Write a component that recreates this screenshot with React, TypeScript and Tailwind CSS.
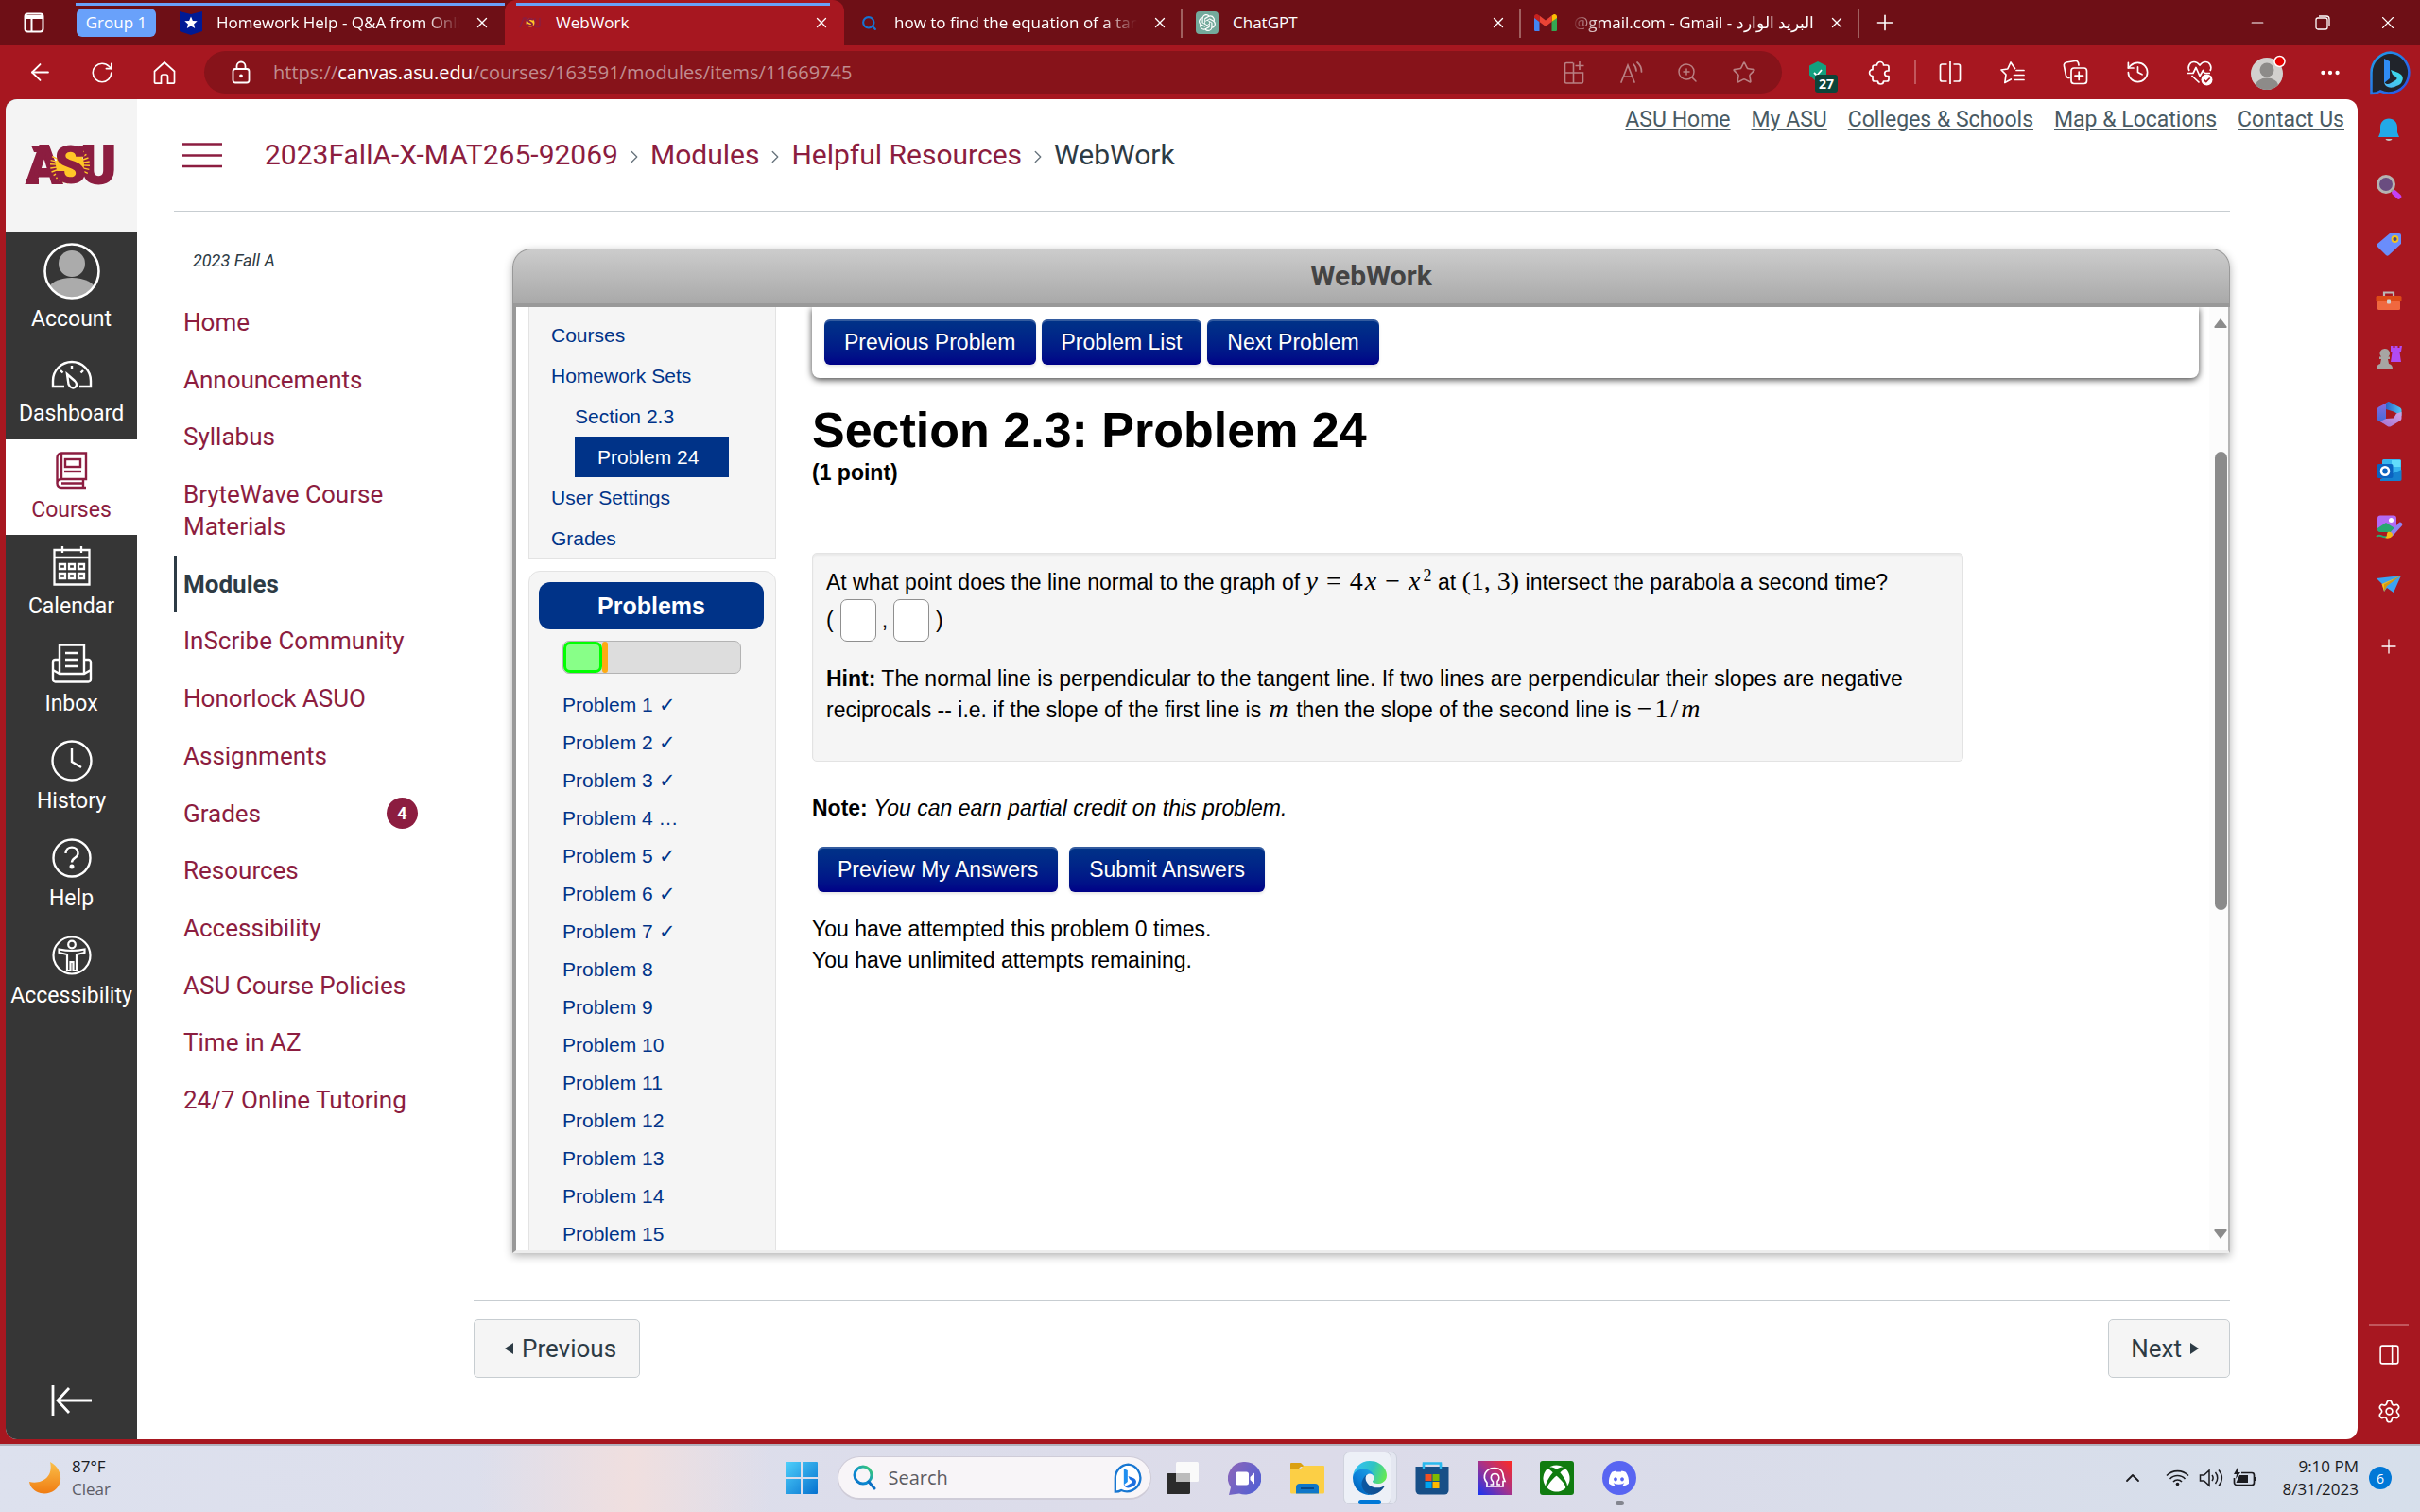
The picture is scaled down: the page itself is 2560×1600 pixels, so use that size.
import React from "react";
import type { ReactNode } from "react";
import {
  ArrowLeft,
  RotateCw,
  ZoomIn,
  Star,
  History,
  X,
  Plus,
  Minus,
  Search,
  Settings,
  ChevronUp,
  ChevronRight,
  Ellipsis,
  PanelRight,
} from "lucide-react";
import { FaDiscord, FaXbox } from "react-icons/fa";
import { SiOpenai } from "react-icons/si";

/* ---------- Tab strip ---------- */

function TabClose({ label }: { label: string }) {
  return (
    <button aria-label={label} className="flex w-[48px] shrink-0 items-center justify-center text-white">
      <X size={18} strokeWidth={1.8} />
    </button>
  );
}

function Tab({
  icon,
  title,
  divider = false,
  grouped = false,
  fadeLeft = false,
  fade = false,
}: {
  icon: ReactNode;
  title: string;
  divider?: boolean;
  grouped?: boolean;
  fadeLeft?: boolean;
  fade?: boolean;
}) {
  return (
    <div className="relative flex h-[48px] w-[358px] items-center">
      {grouped && <span className="absolute top-[3px] right-0 left-[-96px] h-[3px] bg-[#69a1fa]" />}
      <span className="ml-[13px] flex w-[26px] shrink-0 justify-center">{icon}</span>
      <span
        className={
          fadeLeft
            ? "ml-[14px] flex flex-1 justify-end overflow-hidden [mask-image:linear-gradient(to_right,transparent,black_12%)]"
            : fade
              ? "ml-[14px] flex flex-1 overflow-hidden [mask-image:linear-gradient(to_right,black_86%,transparent)]"
              : "ml-[14px] flex flex-1 overflow-hidden"
        }
      >
        <span className="text-[17px] leading-[24px] whitespace-nowrap text-white">{title}</span>
      </span>
      <TabClose label={`Close ${title}`} />
      {divider && <span className="absolute top-[10px] right-0 h-[30px] w-[2px] bg-[#a0605f]" />}
    </div>
  );
}

function RibbonStar() {
  return (
    <svg width="26" height="26" viewBox="0 0 26 26">
      <path d="M1 1l12 3 12-3v21l-12 4L1 22z" fill="#001a94" />
      <path d="M13 6.500l1.900 4.400 4.800.4-3.600 3.100 1.100 4.700-4.200-2.500-4.200 2.500 1.100-4.700-3.600-3.100 4.800-.4z" fill="#fff" />
    </svg>
  );
}

function MiniSun() {
  return (
    <svg width="24" height="12" viewBox="0 0 24 12">
      <path d="M1 11L5 1h2l2 10M17 1v8c0 2 5 2 5 0V1" fill="none" stroke="#8c1d40" strokeWidth="1.600" />
      <ellipse cx="12" cy="6" rx="4.500" ry="4.500" fill="#ffc627" />
      <path d="M15 3c-2-2-6-1-5 1s4 1.500 4 3.500-4 2-5 0" fill="none" stroke="#8c1d40" strokeWidth="2" />
    </svg>
  );
}

function GmailIcon() {
  return (
    <svg width="24" height="18" viewBox="0 0 24 18">
      <path d="M0 3v13.400C0 17.300.7 18 1.600 18H5.500V8z" fill="#4285f4" />
      <path d="M18.500 18h3.900c.9 0 1.600-.7 1.600-1.600V3l-5.500 5z" fill="#34a853" />
      <path d="M18.500 1.600V8L24 4V2.400c0-2-2.300-3.100-3.900-1.900z" fill="#fbbc04" />
      <path d="M5.500 8V1.600L12 6.500l6.500-4.900V8L12 12.900z" fill="#ea4335" />
      <path d="M0 2.400V4l5.500 4V1.600L3.900.5C2.300-.7 0 .4 0 2.400z" fill="#c5221f" />
    </svg>
  );
}

function TabStrip() {
  return (
    <div className="flex h-[48px] items-center bg-[#6e0f16]">
      <button aria-label="Tab actions" className="flex w-[72px] justify-center text-white">
        <svg width="22" height="22" viewBox="0 0 22 22" fill="none" stroke="currentColor" strokeWidth="2">
          <rect x="1.500" y="1.500" width="19" height="19" rx="3" />
          <path d="M2 5h18" strokeWidth="4" />
          <path d="M8.500 6v14" />
        </svg>
      </button>
      <button className="ml-[9px] h-[30px] w-[84px] rounded-[6px] bg-[#69a1fa] text-[17px] text-white">Group 1</button>
      <div className="ml-[11px] flex">
        <Tab icon={<RibbonStar />} title="Homework Help - Q&A from Online Tutors" grouped fade />
        <div className="relative h-[48px] w-[359px] rounded-t-[12px] bg-[#a71720]">
          <span className="absolute top-[3px] right-[15px] left-[12px] h-[3px] bg-[#69a1fa]" />
          <div className="flex h-full items-center">
            <span className="ml-[14px] flex w-[26px] justify-center">
              <MiniSun />
            </span>
            <span className="ml-[14px] flex-1 text-[17px] text-white">WebWork</span>
            <TabClose label="Close WebWork" />
          </div>
        </div>
        <Tab
          icon={<Search size={17} strokeWidth={3} className="text-[#1673d1]" />}
          title="how to find the equation of a tangent line"
          divider
          fade
        />
        <Tab
          icon={
            <span className="rounded-[4px] bg-[#74aa9c] p-[3px] text-white">
              <SiOpenai size={18} />
            </span>
          }
          title="ChatGPT"
          divider
        />
        <Tab icon={<GmailIcon />} title="@gmail.com - Gmail - البريد الوارد" divider fadeLeft />
      </div>
      <button aria-label="New tab" className="flex w-[54px] justify-center text-white">
        <Plus size={26} strokeWidth={1.500} />
      </button>
      <div className="ml-auto flex text-white">
        <button aria-label="Minimize" className="flex w-[69px] items-center justify-center">
          <Minus size={20} strokeWidth={1.400} />
        </button>
        <button aria-label="Restore" className="flex w-[69px] items-center justify-center">
          <svg width="16" height="16" viewBox="0 0 16 16" fill="none" stroke="currentColor" strokeWidth="1.300">
            <rect x="1" y="3" width="12" height="12" rx="2" />
            <path d="M4 1h8c2 0 3 1 3 3v8" />
          </svg>
        </button>
        <button aria-label="Close window" className="flex w-[69px] items-center justify-center">
          <X size={22} strokeWidth={1.200} />
        </button>
      </div>
    </div>
  );
}

/* ---------- Toolbar ---------- */

function ToolButton({ label, children }: { label: string; children: ReactNode }) {
  return (
    <button aria-label={label} className="relative flex h-[57px] w-[66px] shrink-0 items-center justify-center">
      {children}
    </button>
  );
}

function PillButton({ label, children }: { label: string; children: ReactNode }) {
  return (
    <button aria-label={label} className="flex w-[60px] shrink-0 items-center justify-center text-[#b98083]">
      {children}
    </button>
  );
}

function BingBubble() {
  return (
    <svg width="46" height="48" viewBox="0 0 46 48">
      <defs>
        <linearGradient id="bingRing" x1="0" y1="0" x2="1" y2="1">
          <stop offset="0" stopColor="#1fa0e8" />
          <stop offset="1" stopColor="#2b4fe8" />
        </linearGradient>
        <linearGradient id="bingB" x1="0" y1="1" x2="1" y2="0">
          <stop offset="0" stopColor="#4fb4f8" />
          <stop offset="1" stopColor="#37e2e5" />
        </linearGradient>
      </defs>
      <path d="M23 2.500A21.500 21.500 0 1 1 12 43.500c-3 2-6 2.500-9.500 2.500V24A21.500 21.500 0 0 1 23 2.500z" fill="#20242b" stroke="url(#bingRing)" strokeWidth="2.500" />
      <path d="M16 9l6 3v18l-6 5z" fill="#2f8cf5" />
      <path d="M16 34c2 2 4 3 7 1l5-3c2-1 2-3 0-4l-3-2-2-5 8 3c4 2 6 5 4 9-1 3-3 4-6 5-5 3-12 2-13-4z" fill="url(#bingB)" />
    </svg>
  );
}

function Toolbar() {
  return (
    <div className="flex h-[57px] items-center text-white">
      <div className="flex pl-[9px]">
        <ToolButton label="Back">
          <ArrowLeft size={29} strokeWidth={1.500} />
        </ToolButton>
        <ToolButton label="Refresh">
          <RotateCw size={26} strokeWidth={1.500} />
        </ToolButton>
        <ToolButton label="Home">
          <svg width="24" height="26" viewBox="0 0 24 26" fill="none" stroke="currentColor" strokeWidth="1.700">
            <path d="M1.500 11.500L12 2l10.500 9.500V23a1.200 1.200 0 0 1-1.200 1.200H15.500V17a2 2 0 0 0-2-2h-3a2 2 0 0 0-2 2v7.200H2.700A1.200 1.200 0 0 1 1.500 23z" />
          </svg>
        </ToolButton>
      </div>
      <div className="ml-[9px] flex h-[45px] flex-1 items-center rounded-full bg-[#87131a]">
        <span className="ml-[25px] flex w-[28px] justify-center">
          <svg width="20" height="26" viewBox="0 0 20 26" fill="none" stroke="currentColor" strokeWidth="1.800">
            <rect x="1.500" y="9" width="17" height="14.500" rx="2.500" />
            <path d="M5.500 9V6a4.500 4.500 0 0 1 9 0v3" />
            <circle cx="10" cy="16.300" r="1" fill="currentColor" />
          </svg>
        </span>
        <div className="relative ml-[20px] flex-1 text-[20px] leading-[30px]">
          <span className="whitespace-nowrap text-[#c08d90]">
            https://<span className="text-white">canvas.asu.edu</span>/courses/163591/modules/items/11669745
          </span>
          <input type="text" aria-label="Address and search bar" className="absolute inset-0 w-full bg-transparent outline-none" />
        </div>
        <PillButton label="App available">
          <svg width="24" height="26" viewBox="0 0 24 26" fill="none" stroke="currentColor" strokeWidth="1.600">
            <path d="M11 2.500H4A1.500 1.500 0 0 0 2.500 4v18.500A1.500 1.500 0 0 0 4 24h16a1.500 1.500 0 0 0 1.500-1.500V13H2.500M11.500 2.500V24" />
            <path d="M18 1v9M13.500 5.500h9" />
          </svg>
        </PillButton>
        <PillButton label="Read aloud">
          <svg width="25" height="26" viewBox="0 0 25 26" fill="none" stroke="currentColor" strokeWidth="1.700" strokeLinecap="round">
            <path d="M2 23L9 5l7 18M4.500 17h9" />
            <path d="M15 4c2 2 3 4 3 7M19 2c3 2.500 4.500 6 4.500 10" />
          </svg>
        </PillButton>
        <PillButton label="Zoom">
          <ZoomIn size={24} strokeWidth={1.500} />
        </PillButton>
        <PillButton label="Favorite this page">
          <Star size={26} strokeWidth={1.500} />
        </PillButton>
        <span className="w-[10px]" />
      </div>
      <div className="flex items-center pl-[5px]">
        <ToolButton label="Shield extension, 27">
          <svg width="22" height="26" viewBox="0 0 22 26">
            <path d="M11 1l9 4.500v10L11 24l-9-8.500v-10z" fill="#12a07f" />
            <path d="M7 13l3 3 5-6" fill="none" stroke="#fff" strokeWidth="1.800" />
          </svg>
          <span className="absolute top-[31px] left-[30px] flex h-[19px] w-[24px] items-center justify-center rounded-[3px] bg-[#0c4439] text-[14px] font-bold">
            27
          </span>
        </ToolButton>
        <ToolButton label="Extensions">
          <svg width="26" height="26" viewBox="0 0 26 26" fill="none" stroke="currentColor" strokeWidth="1.700" strokeLinejoin="round">
            <path d="M9.500 5a3.500 3.500 0 0 1 7 0H20a2 2 0 0 1 2 2v4h-1.500a2.800 2.800 0 0 0 0 5.600H22V20a2 2 0 0 1-2 2h-3.500a3 3 0 0 1-6 0H7a2 2 0 0 1-2-2v-3.500a3.400 3.400 0 0 1 0-6.800V7a2 2 0 0 1 2-2z" />
          </svg>
        </ToolButton>
        <span className="mx-[3px] h-[25px] w-[2px] bg-[#c2575d]" />
        <ToolButton label="Split screen">
          <svg width="26" height="26" viewBox="0 0 26 26" fill="none" stroke="currentColor" strokeWidth="1.700">
            <path d="M9.500 4H4.500A2 2 0 0 0 2.500 6v14a2 2 0 0 0 2 2h5M16.500 4h5a2 2 0 0 1 2 2v14a2 2 0 0 1-2 2h-5M13 1v24" />
          </svg>
        </ToolButton>
        <ToolButton label="Favorites">
          <svg width="28" height="26" viewBox="0 0 28 26" fill="none" stroke="currentColor" strokeWidth="1.700" strokeLinejoin="round" strokeLinecap="round">
            <path d="M16.500 8.500L12 2 8.800 9 2 10l5 5-1.200 8.500 6.500-3.500" />
            <path d="M18 10.500h8M15.500 15.500H26M16 20.500h10" />
          </svg>
        </ToolButton>
        <ToolButton label="Collections">
          <svg width="27" height="27" viewBox="0 0 27 27" fill="none" stroke="currentColor" strokeWidth="1.700" strokeLinecap="round">
            <path d="M7 19.500c-2 0-3-1-3.500-2.500L1.500 7C1 5 2 3.500 4 3l9-1.500c2-.3 3 .5 3.500 2L17 6" />
            <rect x="9" y="9" width="16.500" height="16.500" rx="3" />
            <path d="M17.200 13v8.500M13 17.200h8.500" />
          </svg>
        </ToolButton>
        <ToolButton label="History">
          <History size={27} strokeWidth={1.500} />
        </ToolButton>
        <ToolButton label="Browser essentials">
          <svg width="28" height="28" viewBox="0 0 28 28" fill="none" stroke="currentColor" strokeWidth="1.700" strokeLinejoin="round">
            <path d="M3 12C.5 7 4 2.500 8 2.500c3 0 4.500 1.500 6 3.500 1.500-2 3-3.500 6-3.500 4 0 7.500 4.500 5 9.500M5.500 17l8 7.500" />
            <path d="M1 14.500h6l3-6 4 9 3.500-6 1.500 3h6" />
            <circle cx="21.500" cy="21.500" r="6" fill="#fff" stroke="none" />
            <path d="M18.500 21.500l2.200 2.200 4-4.200" stroke="#a71720" />
          </svg>
        </ToolButton>
        <span className="w-[6px]" />
        <ToolButton label="Profile">
          <svg width="38" height="38" viewBox="0 0 38 38">
            <defs>
              <clipPath id="profileClip">
                <circle cx="18" cy="20" r="17" />
              </clipPath>
            </defs>
            <circle cx="18" cy="20" r="17" fill="#d2d0ce" />
            <g clipPath="url(#profileClip)" fill="#8d8b89">
              <circle cx="18" cy="16" r="7.500" />
              <ellipse cx="18" cy="33" rx="12" ry="8.500" />
            </g>
            <circle cx="31.500" cy="7" r="5.500" fill="#e60000" stroke="#fff" strokeWidth="1.500" />
          </svg>
        </ToolButton>
        <ToolButton label="Settings and more">
          <Ellipsis size={26} strokeWidth={2} />
        </ToolButton>
        <button aria-label="Bing chat" className="flex w-[62px] items-center justify-center">
          <BingBubble />
        </button>
      </div>
    </div>
  );
}

/* ---------- Edge side bar ---------- */

function SideButton({ label, children }: { label: string; children: ReactNode }) {
  return (
    <button aria-label={label} className="flex h-[60px] w-full items-center justify-center text-white">
      {children}
    </button>
  );
}

function EdgeSidebar() {
  return (
    <aside className="flex w-[66px] shrink-0 flex-col items-center pt-[3px]">
      <SideButton label="Notifications">
        <svg width="24" height="28" viewBox="0 0 24 28">
          <path d="M12 1.500c-5.500 0-9 4-9 9V16l-2 5h22l-2-5v-5.500c0-5-3.500-9-9-9z" fill="#22a9e8" />
          <path d="M8.500 23h7c-.5 2.500-6.500 2.500-7 0z" fill="#c9c4c0" />
        </svg>
      </SideButton>
      <SideButton label="Search">
        <svg width="28" height="28" viewBox="0 0 28 28">
          <circle cx="11" cy="11" r="8.500" fill="#6a4d80" stroke="#b5b3b1" strokeWidth="3" />
          <path d="M17 17l3 3" stroke="#99978f" strokeWidth="3" />
          <path d="M20 20l4.500 4" stroke="#c440f5" strokeWidth="5.500" strokeLinecap="round" />
        </svg>
      </SideButton>
      <SideButton label="Shopping">
        <svg width="28" height="28" viewBox="0 0 28 28">
          <path d="M15 3h10a2 2 0 0 1 2 2v9L14 26c-1 1-2 1-3 0L2 17c-1-1-1-2 0-3z" fill="#6a8dfb" />
          <circle cx="20.500" cy="9" r="3" fill="#4b4b7c" stroke="#f4c31b" strokeWidth="1.800" />
        </svg>
      </SideButton>
      <SideButton label="Tools">
        <svg width="28" height="26" viewBox="0 0 28 26">
          <path d="M9 8V4.500h10V8" fill="none" stroke="#bcb8b5" strokeWidth="2.200" />
          <rect x="2" y="13" width="24" height="10" rx="1.500" fill="#f0683f" />
          <rect x="0.500" y="8" width="27" height="6" rx="1.500" fill="#dd4a17" />
          <rect x="12" y="11.500" width="4" height="5" rx="1" fill="#d2d0ce" />
        </svg>
      </SideButton>
      <SideButton label="Games">
        <svg width="28" height="28" viewBox="0 0 28 28">
          <path d="M16 2h2.500v2h2V2h3v2h2V2H28l-1 6-1.500 1 1.500 10H16l1.500-10L16 8z" fill="#b24bf3" />
          <path d="M10 5a5 5 0 0 1 3.500 8.500H15V16h-2l1 5c2 .5 4 2 4 5H1c0-3 2-4.500 4-5l1-5H4v-2.500h2A5 5 0 0 1 10 5z" fill="#a7a5a3" />
        </svg>
      </SideButton>
      <SideButton label="Microsoft 365">
        <svg width="27" height="28" viewBox="0 0 27 28">
          <defs>
            <linearGradient id="m365a" x1="0" y1="0" x2="0" y2="1">
              <stop offset="0" stopColor="#8a6be0" />
              <stop offset="1" stopColor="#3f6ad6" />
            </linearGradient>
            <linearGradient id="m365b" x1="0" y1="0" x2="1" y2="0">
              <stop offset="0" stopColor="#2a62c8" />
              <stop offset="1" stopColor="#4fc8f4" />
            </linearGradient>
            <linearGradient id="m365c" x1="0" y1="1" x2="1" y2="0">
              <stop offset="0" stopColor="#a56fd0" />
              <stop offset="1" stopColor="#cfa4e6" />
            </linearGradient>
          </defs>
          <path d="M13 1L2.500 6.500C1.500 7 .5 8 .5 9.500v9c0 1.500 1 2.500 2 3L7 24l3-5V9z" fill="url(#m365a)" />
          <path d="M10 2.500l3-1.500 11.500 6c1 .5 2 1.500 2 3v6L18 11.500 10 9z" fill="url(#m365b)" />
          <path d="M26.500 12v6.500c0 1.500-1 2.500-2 3L15.500 27c-1.300.7-2.700.7-4 0L4 22l6-3 8-.5 3-5z" fill="url(#m365c)" />
        </svg>
      </SideButton>
      <SideButton label="Outlook">
        <svg width="27" height="26" viewBox="0 0 27 26">
          <rect x="6" y="1" width="20" height="15" rx="1.500" fill="#37b5ee" />
          <path d="M16 2h9.500v7H16z" fill="#62dcfb" />
          <path d="M4 24h20.500c1.500 0 2-1 2-2V12L4 22z" fill="#1480cf" />
          <rect x="0.500" y="6" width="17" height="15" rx="2" fill="#0a62c0" />
          <ellipse cx="9" cy="13.500" rx="4" ry="4.300" fill="none" stroke="#fff" strokeWidth="2.500" />
        </svg>
      </SideButton>
      <SideButton label="Image creator">
        <svg width="29" height="28" viewBox="0 0 29 28">
          <rect x="2" y="1.500" width="20" height="17" rx="3" fill="#b36af5" />
          <path d="M2 15l9-6 11 7v1c0 1-1 2-2 2H5c-2 0-3-1-3-3z" fill="#27a870" />
          <circle cx="16.500" cy="6.500" r="2.500" fill="#fff" />
          <path d="M1 24c4-4 6 2 11 0" fill="none" stroke="#27a870" strokeWidth="2" />
          <path d="M17 21l9-10" stroke="#8f83f2" strokeWidth="4.500" strokeLinecap="round" />
          <path d="M13 19c3-1 5 1 5 3s-4 5-8 3c3-1 1-4 3-6z" fill="#f5b916" />
        </svg>
      </SideButton>
      <SideButton label="Drop">
        <svg width="28" height="24" viewBox="0 0 28 24">
          <path d="M1 6l26-3-8 18-7-5-3 4-2-8z" fill="#3ba3f2" />
          <path d="M27 3L9 12.500v7L6.500 12z" fill="#f5b916" />
          <path d="M27 3L12 14l-3 6v-7.500z" fill="#d99a08" />
        </svg>
      </SideButton>
      <div className="mt-[6px] w-full">
        <SideButton label="Customize">
          <Plus size={24} strokeWidth={1.300} />
        </SideButton>
      </div>
      <div className="mt-auto flex w-full flex-col items-center">
        <span className="h-[2px] w-[42px] bg-[#c2575d]" />
        <SideButton label="Hide sidebar">
          <PanelRight size={25} strokeWidth={1.500} />
        </SideButton>
        <SideButton label="Settings">
          <Settings size={27} strokeWidth={1.500} />
        </SideButton>
      </div>
    </aside>
  );
}

/* ---------- Canvas global navigation ---------- */

const sunRays = [-82, -70, -58, -46, -34, -22, -10, 2, 14, 26, 98, 110, 122, 134, 146, 158, 170, 182, 194, 206];

function AsuLogo() {
  return (
    <svg width="100" height="70" viewBox="0 -12 100 70" role="img" aria-label="ASU">
      <g fontFamily="Roboto, sans-serif" fontWeight="900" fontSize="55" fill="#8c1d40" stroke="#8c1d40" strokeWidth="2">
        <text x="2" y="42">A</text>
        <text x="60" y="42">U</text>
      </g>
      <path d="M7 2h18v7H10zM56 2h14v6H60zM1 37h14v6H1z" fill="#8c1d40" />
      <circle cx="48" cy="22.500" r="15" fill="#ffc627" />
      <g stroke="#ffc627" strokeWidth="1.400">
        {sunRays.map((deg) => {
          const a = (deg * Math.PI) / 180;
          return (
            <line
              key={deg}
              x1={48 + Math.cos(a) * 12}
              y1={22.5 + Math.sin(a) * 12}
              x2={48 + Math.cos(a) * 21}
              y2={22.5 + Math.sin(a) * 20}
            />
          );
        })}
      </g>
      <text x="31" y="42" fontFamily="Roboto, sans-serif" fontWeight="900" fontSize="55" fill="#8c1d40">
        S
      </text>
    </svg>
  );
}

function NavItem({
  label,
  active = false,
  tall = false,
  children,
}: {
  label: string;
  active?: boolean;
  tall?: boolean;
  children: ReactNode;
}) {
  return (
    <a
      href="#"
      className={
        active
          ? "flex flex-col items-center gap-[6px] bg-white pt-[12px] pb-[11px] text-[#8c1d40]"
          : tall
            ? "flex flex-col items-center gap-[7px] pt-[12px] pb-[12px] text-white"
            : "flex flex-col items-center gap-[6px] pt-[12px] pb-[12px] text-white"
      }
    >
      <span className="flex h-[42px] items-center">{children}</span>
      <span className="text-[23px] leading-[30px]">{label}</span>
    </a>
  );
}

function GlobalNav() {
  return (
    <nav aria-label="Global navigation" className="flex w-[139px] shrink-0 flex-col bg-[#363636] font-[Roboto,sans-serif]">
      <a href="#" className="flex h-[140px] items-center justify-center bg-[#f4f4f4]">
        <AsuLogo />
      </a>
      <a href="#" className="flex flex-col items-center gap-[6px] pt-[12px] pb-[10px] text-white">
        <svg width="60" height="60" viewBox="0 0 60 60">
          <defs>
            <clipPath id="avatarClip">
              <circle cx="30" cy="30" r="28" />
            </clipPath>
          </defs>
          <g clipPath="url(#avatarClip)" fill="#ababab">
            <circle cx="30" cy="22" r="14" />
            <ellipse cx="30" cy="50" rx="25" ry="13" />
          </g>
          <circle cx="30" cy="30" r="28.500" fill="none" stroke="#fff" strokeWidth="2.600" />
        </svg>
        <span className="text-[23px] leading-[30px]">Account</span>
      </a>
      <NavItem label="Dashboard">
        <svg width="44" height="34" viewBox="0 0 44 34" fill="none" stroke="currentColor" strokeWidth="2.400">
          <path d="M14 30H2v-6a20 20 0 0 1 40 0v6H30" />
          <path d="M22 8v3M10 13l2.500 2.500M34 13l-2.500 2.500" />
          <path d="M17 17l8 7c5 5-1 10-5 6-2-2-2-4-2-6z" />
        </svg>
      </NavItem>
      <NavItem label="Courses" active>
        <svg width="34" height="40" viewBox="0 0 34 40" fill="none" stroke="currentColor" strokeWidth="2.400">
          <path d="M32 38H6c-6 0-6-9 0-9h26V1.500H6a4.500 4.500 0 0 0-4.500 4.500v28M29 29v9M6 33.500h23M6 2v27" />
          <rect x="10" y="8" width="16" height="8" />
          <path d="M9 21h18" />
        </svg>
      </NavItem>
      <NavItem label="Calendar" tall>
        <svg width="40" height="44" viewBox="0 0 40 44" fill="none" stroke="currentColor" strokeWidth="2.300">
          <path d="M1.500 5h37v36.500h-37zM1.500 13h37M10 1v7M30 1v7" />
          <path d="M7 20h6v5H7zM17 20h6v5h-6zM27 20h6v5h-6zM7 30h6v5H7zM17 30h6v5h-6zM27 30h6v5h-6z" />
        </svg>
      </NavItem>
      <NavItem label="Inbox" tall>
        <svg width="44" height="42" viewBox="0 0 44 42" fill="none" stroke="currentColor" strokeWidth="2.400">
          <path d="M9 32V1.500h26V32M9 17H4.500A2.500 2.500 0 0 0 2 19.500V38a2.500 2.500 0 0 0 2.500 2.500h35A2.500 2.500 0 0 0 42 38V19.500A2.500 2.500 0 0 0 39.500 17H35M2 28l7 4h26l7-4" />
          <path d="M15 10h14M15 17h14M15 24h14" />
        </svg>
      </NavItem>
      <NavItem label="History" tall>
        <svg width="44" height="44" viewBox="0 0 44 44" fill="none" stroke="currentColor" strokeWidth="2.400">
          <circle cx="22" cy="22" r="20.500" />
          <path d="M22 9v14l10 6" />
        </svg>
      </NavItem>
      <NavItem label="Help" tall>
        <svg width="42" height="42" viewBox="0 0 42 42" fill="none" stroke="currentColor" strokeWidth="2.400">
          <circle cx="21" cy="21" r="19.500" />
          <path d="M14.500 16c0-8.500 13-8.500 13 0 0 5-6.500 4.500-6.500 9.500" />
          <circle cx="21" cy="30" r="1.300" fill="currentColor" />
        </svg>
      </NavItem>
      <NavItem label="Accessibility" tall>
        <svg width="42" height="42" viewBox="0 0 42 42" fill="none" stroke="currentColor" strokeWidth="2.200">
          <circle cx="21" cy="21" r="19.500" />
          <circle cx="21" cy="9.500" r="3.800" />
          <path d="M7.500 14.500c9 2 18 2 27 0v3.500l-8.500 2v17h-3.500V28h-3v9H16V20l-8.500-2z" />
        </svg>
      </NavItem>
      <button aria-label="Minimize global navigation" className="mt-auto mb-[24px] flex justify-center text-white">
        <svg width="44" height="34" viewBox="0 0 44 34" fill="none" stroke="currentColor" strokeWidth="2.800">
          <path d="M2 1v32M43 17H7M19 4L7 17l12 13" />
        </svg>
      </button>
    </nav>
  );
}

/* ---------- Course page ---------- */

const topLinks = ["ASU Home", "My ASU", "Colleges & Schools", "Map & Locations", "Contact Us"];
const crumbs = ["2023FallA-X-MAT265-92069", "Modules", "Helpful Resources"];
const courseMenu = [
  "Home",
  "Announcements",
  "Syllabus",
  "BryteWave Course Materials",
  "Modules",
  "InScribe Community",
  "Honorlock ASUO",
  "Assignments",
  "Grades",
  "Resources",
  "Accessibility",
  "ASU Course Policies",
  "Time in AZ",
  "24/7 Online Tutoring",
];
const problems = [
  "Problem 1 ✓",
  "Problem 2 ✓",
  "Problem 3 ✓",
  "Problem 4 …",
  "Problem 5 ✓",
  "Problem 6 ✓",
  "Problem 7 ✓",
  "Problem 8",
  "Problem 9",
  "Problem 10",
  "Problem 11",
  "Problem 12",
  "Problem 13",
  "Problem 14",
  "Problem 15",
];

function CourseMenu() {
  return (
    <nav aria-label="Course navigation" className="w-[317px] shrink-0 pt-[39px]">
      <p className="pl-[20px] text-[18px] leading-[26px] text-[#2d3b45] italic">2023 Fall A</p>
      <ul className="mt-[22px] flex h-[883px] w-[258px] flex-col justify-between">
        {courseMenu.map((item) => (
          <li key={item}>
            <a
              href="#"
              aria-current={item === "Modules" ? "page" : undefined}
              className={
                item === "Modules"
                  ? "flex border-l-[3px] border-[#2d3b45] py-[13px] pl-[7px] text-[26px] leading-[34px] font-bold text-[#2d3b45]"
                  : "flex items-center justify-between py-[13px] pl-[10px] text-[26px] leading-[34px] text-[#8c1d40]"
              }
            >
              {item}
              {item === "Grades" && (
                <span className="flex h-[33px] w-[33px] items-center justify-center rounded-full bg-[#8c1d40] text-[18px] font-bold text-white">
                  4
                </span>
              )}
            </a>
          </li>
        ))}
      </ul>
    </nav>
  );
}

function BlueButton({ children }: { children: ReactNode }) {
  return (
    <button className="h-[48px] rounded-[6px] bg-linear-to-b from-[#003388] to-[#000088] px-[21px] text-[23px] leading-[32px] text-white shadow-[inset_0_2px_0_rgba(255,255,255,0.2),0_2px_3px_rgba(0,0,0,0.1)] [text-shadow:0_-1px_0_rgba(0,0,0,0.25)]">
      {children}
    </button>
  );
}

function MathText({ children }: { children: ReactNode }) {
  return <span className="font-['Liberation_Serif',serif] text-[28px] leading-none whitespace-nowrap">{children}</span>;
}

function SiteNav() {
  const link = "block py-[6px] pl-[23px] text-[21px] leading-[31px] text-[#003388]";
  return (
    <nav aria-label="WeBWorK navigation" className="ml-[13px] flex w-[262px] shrink-0 flex-col">
      <div className="h-[268px] border border-t-0 border-[#e3e3e3] bg-[#f5f5f5] pt-[8px]">
        <a href="#" className={link}>Courses</a>
        <a href="#" className={link}>Homework Sets</a>
        <a href="#" className="ml-[24px] block py-[6px] pl-[24px] text-[21px] leading-[31px] text-[#003388]">Section 2.3</a>
        <a href="#" className="ml-[48px] block w-[163px] bg-[#003388] py-[6px] pl-[24px] text-[21px] leading-[31px] text-white">
          Problem 24
        </a>
        <a href="#" className={link}>User Settings</a>
        <a href="#" className={link}>Grades</a>
      </div>
      <div className="mt-[12px] flex-1 rounded-t-[12px] border border-[#e3e3e3] bg-[#f5f5f5] pt-[11px] pr-[12px] pl-[10px]">
        <h2 className="rounded-[12px] bg-[#003388] text-center text-[25px] leading-[50px] font-bold text-white">Problems</h2>
        <div
          role="progressbar"
          aria-label="Problem progress"
          aria-valuenow={22}
          className="mt-[12px] ml-[25px] flex h-[35px] w-[189px] rounded-[7px] border border-[#b3b3b3] bg-[#dddddd]"
        >
          <span className="h-full w-[41px] rounded-[7px] border-[3px] border-[#00ff00] bg-[#88ff88]" />
          <span className="h-full w-[6px] rounded-[3px] border-[3px] border-[#ffaa11] bg-[#ffdd88]" />
        </div>
        <ul className="mt-[13px] pl-[25px]">
          {problems.map((p) => (
            <li key={p}>
              <a href="#" className="block text-[21px] leading-[40px] text-[#003388]">{p}</a>
            </li>
          ))}
        </ul>
      </div>
    </nav>
  );
}

function ProblemPane() {
  return (
    <main className="ml-[38px] min-w-0 flex-1 pr-[11px] text-[23px] leading-[33px] text-black">
      <div className="flex h-[75px] items-start gap-[6px] rounded-b-[8px] pt-[13px] pl-[13px] shadow-[0_2px_7px_rgba(0,0,0,0.75)]">
        <BlueButton>Previous Problem</BlueButton>
        <BlueButton>Problem List</BlueButton>
        <BlueButton>Next Problem</BlueButton>
      </div>
      <h1 className="mt-[25px] text-[52px] leading-[60px] font-bold">Section 2.3: Problem 24</h1>
      <p className="mt-[-1px] font-bold">(1 point)</p>
      <section className="mt-[68px] max-w-[1218px] rounded-[5px] border border-[#e3e3e3] bg-[#f5f5f5] px-[14px] pt-[14px] pb-[37px] shadow-[inset_0_2px_2px_rgba(0,0,0,0.05)]">
        <p className="whitespace-nowrap">
          At what point does the line normal to the graph of{" "}
          <MathText>
            <i>y</i>
            <span className="mx-[9px]">=</span>4<i className="ml-[2px]">x</i>
            <span className="mx-[9px]">−</span>
            <i>x</i>
            <sup className="ml-[3px] text-[18px]">2</sup>
          </MathText>{" "}
          at <MathText>(1, 3)</MathText> intersect the parabola a second time?
        </p>
        <div className="flex h-[46px] items-center">
          <span className="w-[15px]">(</span>
          <input type="text" aria-label="Answer 1" className="h-[45px] w-[38px] rounded-[7px] border border-[#8f8f8f] bg-white" />
          <span className="w-[18px] text-center">,</span>
          <input type="text" aria-label="Answer 2" className="h-[45px] w-[38px] rounded-[7px] border border-[#8f8f8f] bg-white" />
          <span className="ml-[7px]">)</span>
        </div>
        <p className="mt-[23px]">
          <b>Hint:</b> The normal line is perpendicular to the tangent line. If two lines are perpendicular their slopes are negative
          reciprocals -- i.e. if the slope of the first line is{" "}
          <MathText>
            <i className="mx-[2px]">m</i>
          </MathText>{" "}
          then the slope of the second line is{" "}
          <MathText>
            <span className="mr-[3px]">−</span>1<span className="mx-[3px]">/</span>
            <i>m</i>
          </MathText>
        </p>
      </section>
      <p className="mt-[33px]">
        <b>Note:</b> <i>You can earn partial credit on this problem.</i>
      </p>
      <div className="mt-[24px] ml-[6px] flex gap-[12px]">
        <BlueButton>Preview My Answers</BlueButton>
        <BlueButton>Submit Answers</BlueButton>
      </div>
      <p className="mt-[23px]">You have attempted this problem 0 times.</p>
      <p>You have unlimited attempts remaining.</p>
    </main>
  );
}

function ToolFrame() {
  return (
    <div className="ml-[41px] flex min-h-0 flex-1 flex-col rounded-t-[20px] shadow-[0_3px_10px_rgba(0,0,0,0.3)]">
      <h2 className="h-[62px] rounded-t-[20px] border border-b-[4px] border-[#999999] bg-linear-to-b from-[#cccccc] to-[#a9a9a9] text-center font-[Roboto,sans-serif] text-[30px] leading-[56px] font-bold text-[#444444]">
        WebWork
      </h2>
      <div className="flex min-h-0 flex-1 overflow-hidden border-r-[2px] border-b-[3px] border-l-[4px] border-r-[#b5b5b5] border-b-[#ededed] border-l-[#999999] bg-white font-['Liberation_Sans',Arial,sans-serif]">
        <SiteNav />
        <ProblemPane />
        <div className="flex w-[20px] flex-col items-center bg-[#fcfcfc] pt-[12px] pb-[12px] pl-[4px]">
          <svg width="14" height="10" viewBox="0 0 14 10" fill="#8b8b8b">
            <path d="M7 0l6.500 8.500c.4.800 0 1.500-1 1.500H1.500c-1 0-1.400-.7-1-1.500z" />
          </svg>
          <span className="mt-[131px] h-[485px] w-[13px] rounded-full bg-[#8b8b8b]" />
          <svg className="mt-auto" width="14" height="10" viewBox="0 0 14 10" fill="#8b8b8b">
            <path d="M7 10L.5 1.500C.1.700.5 0 1.500 0h11c1 0 1.400.7 1 1.500z" />
          </svg>
        </div>
      </div>
    </div>
  );
}

function CoursePage() {
  return (
    <div className="flex min-w-0 flex-1 flex-col font-[Roboto,sans-serif]">
      <div className="flex h-[42px] items-center justify-end gap-[22px] pt-[2px] pr-[14px] text-[23px] leading-[30px] text-[#495a63]">
        {topLinks.map((l) => (
          <a key={l} href="#" className="underline decoration-2 underline-offset-2">{l}</a>
        ))}
      </div>
      <header className="mr-[135px] ml-[39px] flex h-[77px] items-start border-b border-[#c7cdd1]">
        <button aria-label="Toggle course navigation" className="ml-[9px] flex h-[34px] w-[42px] items-center text-[#8c1d40]">
          <svg width="42" height="28" viewBox="0 0 42 28" stroke="currentColor" strokeWidth="2.600">
            <path d="M0 2.500h42M0 14.500h42M0 26h42" />
          </svg>
        </button>
        <nav aria-label="Breadcrumb" className="ml-[45px] flex items-center text-[30px] leading-[34px] text-[#8c1d40]">
          {crumbs.map((c) => (
            <React.Fragment key={c}>
              <a href="#">{c}</a>
              <ChevronRight size={22} strokeWidth={1.500} className="mx-[6px] mt-[4px] text-[#6b7780]" />
            </React.Fragment>
          ))}
          <span className="text-[#2d3b45]">WebWork</span>
        </nav>
      </header>
      <div className="mr-[135px] ml-[39px] flex min-h-0 flex-1">
        <CourseMenu />
        <div className="flex min-w-0 flex-1 flex-col pt-[39px]">
          <ToolFrame />
          <footer className="mt-[50px] flex justify-between border-t border-[#c7cdd1] pt-[19px] pb-[65px] text-[26px] text-[#2d3b45]">
            <a href="#" className="flex h-[62px] items-center gap-[9px] rounded-[5px] border border-[#c7cdd1] bg-[#f5f5f5] pr-[24px] pl-[32px]">
              <svg width="9" height="12" viewBox="0 0 9 12" fill="currentColor">
                <path d="M9 0v12L0 6z" />
              </svg>
              Previous
            </a>
            <a href="#" className="flex h-[62px] items-center gap-[9px] rounded-[5px] border border-[#c7cdd1] bg-[#f5f5f5] pr-[32px] pl-[23px]">
              Next
              <svg width="9" height="12" viewBox="0 0 9 12" fill="currentColor">
                <path d="M0 0v12l9-6z" />
              </svg>
            </a>
          </footer>
        </div>
      </div>
    </div>
  );
}

/* ---------- Taskbar ---------- */

function TaskButton({ label, active = false, children }: { label: string; active?: boolean; children: ReactNode }) {
  return (
    <button aria-label={label} className="relative flex h-[68px] w-[66px] items-center justify-center">
      {active && (
        <>
          <span className="absolute inset-y-[6px] left-[5px] w-[57px] rounded-[7px] border border-[#ccd0dc] bg-[#e4e7f1]" />
          <span className="absolute inset-y-[6px] left-[5px] w-[51px] rounded-[7px] border border-[#d0d3de] bg-[#edf0f7]" />
          <span className="absolute bottom-[6px] left-[21px] h-[5px] w-[24px] rounded-full bg-[#0078d7]" />
        </>
      )}
      <span className="relative">{children}</span>
    </button>
  );
}

function EdgeLogo() {
  return (
    <svg width="36" height="36" viewBox="0 0 256 256">
      <defs>
        <linearGradient id="edgeA" x1="60" y1="177" x2="241" y2="177" gradientUnits="userSpaceOnUse">
          <stop offset="0" stopColor="#0c59a4" />
          <stop offset="1" stopColor="#114a8b" />
        </linearGradient>
        <linearGradient id="edgeB" x1="157" y1="100" x2="46" y2="221" gradientUnits="userSpaceOnUse">
          <stop offset="0" stopColor="#1b9de2" />
          <stop offset="0.6" stopColor="#0c80da" />
          <stop offset="1" stopColor="#0067c0" />
        </linearGradient>
        <linearGradient id="edgeC" x1="20" y1="50" x2="250" y2="130" gradientUnits="userSpaceOnUse">
          <stop offset="0" stopColor="#35c1f1" />
          <stop offset="0.5" stopColor="#2fc2c5" />
          <stop offset="1" stopColor="#66eb4e" />
        </linearGradient>
      </defs>
      <path fill="url(#edgeA)" d="M231 190.500c-3.400 1.800-6.900 3.400-10.500 4.700a101.500 101.500 0 0 1-35.800 6.500c-47.100 0-88.200-32.400-88.200-74a31.500 31.500 0 0 1 16.400-27.300c-42.600 1.800-53.600 46.200-53.600 72.200 0 73.600 67.800 81 82.400 81 7.900 0 19.800-2.300 27-4.600l1.300-.4a128.300 128.300 0 0 0 66.600-52.800 4 4 0 0 0-5.600-5.300z" />
      <path fill="url(#edgeB)" d="M105.700 241.400a79.200 79.200 0 0 1-22.700-21.300 80.700 80.700 0 0 1 29.500-120c3.200-1.500 8.500-4.100 15.600-4a32.400 32.400 0 0 1 25.700 13 31.900 31.900 0 0 1 6.300 18.700c0-.2 24.500-79.600-80-79.600-43.900 0-80 41.700-80 78.200a130.200 130.200 0 0 0 12.100 56 128 128 0 0 0 156.400 67 75.500 75.500 0 0 1-62.800-8z" />
      <path fill="url(#edgeC)" d="M152.300 148.900c-.9 1-3.400 2.500-3.400 5.600 0 2.600 1.700 5.200 4.800 7.300 14.300 10 41.400 8.600 41.500 8.600a59.600 59.600 0 0 0 30.300-8.300 61.400 61.400 0 0 0 30.400-52.900c.3-22.400-8-37.300-11.300-43.900C223.500 23.900 177.700 0 128 0A128 128 0 0 0 0 126.200c.5-36.500 36.800-66 80-66 3.500 0 23.500.3 42 10a72.600 72.600 0 0 1 30.900 29.300c6.100 10.600 7.200 24.100 7.200 29.500s-2.700 13.300-7.800 19.900z" />
    </svg>
  );
}

function Taskbar() {
  return (
    <footer className="grid h-[72px] grid-cols-[1fr_auto_1fr] items-center border-t-2 border-[#b1b2bd] bg-linear-to-r from-[#dde1ee] via-[#dcdbe9] via-55% to-[#d6dfeb]">
      <div className="flex h-full items-center bg-linear-to-r from-transparent from-62% via-[#f0dfdf] via-82% to-transparent pb-[2px] pl-[30px]">
        <svg width="36" height="36" viewBox="0 0 36 36">
          <defs>
            <linearGradient id="moon" x1="0" y1="0" x2="0" y2="1">
              <stop offset="0" stopColor="#fac04a" />
              <stop offset="1" stopColor="#f07c12" />
            </linearGradient>
          </defs>
          <path d="M23 1c8 4 12 12 11 20-2 10-12 15-21 13C6 32 2 28 1 22c12 3 26-4 22-21z" fill="url(#moon)" />
        </svg>
        <div className="ml-[10px] text-[17px] leading-[24px]">
          <div className="text-[#1b1b1f]">87°F</div>
          <div className="text-[#5c5c66]">Clear</div>
        </div>
      </div>
      <div className="flex h-full items-center pb-[2px]">
        <TaskButton label="Start">
          <svg width="36" height="36" viewBox="0 0 36 36">
            <defs>
              <linearGradient id="win" x1="0" y1="0" x2="1" y2="1">
                <stop offset="0" stopColor="#4fd0fb" />
                <stop offset="1" stopColor="#0571cf" />
              </linearGradient>
            </defs>
            <path d="M1 2a1 1 0 0 1 1-1h15v16H1zM19 1h15a1 1 0 0 1 1 1v15H19zM1 19h16v16H2a1 1 0 0 1-1-1zM19 19h16v15a1 1 0 0 1-1 1H19z" fill="url(#win)" />
          </svg>
        </TaskButton>
        <label className="ml-[5px] flex h-[46px] w-[332px] items-center rounded-full border border-b-2 border-[#cfccd8] bg-[#f8f5f8] pr-[8px] pl-[14px]">
          <svg width="26" height="30" viewBox="0 0 26 30" fill="none" strokeWidth="3">
            <defs>
              <linearGradient id="lens" x1="1" y1="0" x2="0" y2="1">
                <stop offset="0" stopColor="#3ecf6a" />
                <stop offset="0.600" stopColor="#0b8fd4" />
                <stop offset="1" stopColor="#0b6fc4" />
              </linearGradient>
            </defs>
            <circle cx="12" cy="12" r="9" stroke="url(#lens)" />
            <path d="M18 19l6 7" stroke="#0b6fc4" strokeLinecap="round" />
          </svg>
          <input
            type="text"
            aria-label="Search"
            placeholder="Search"
            className="ml-[13px] min-w-0 flex-1 bg-transparent text-[20px] outline-none placeholder:text-[#5d5b62]"
          />
          <svg width="31" height="32" viewBox="0 0 46 48">
            <path d="M23 2.500A21.500 21.500 0 1 1 12 43.500c-3 2-6 2.500-9.500 2.500V24A21.500 21.500 0 0 1 23 2.500z" fill="#fff" stroke="#1877d2" strokeWidth="3.500" />
            <path d="M16 9l6 3v18l-6 5z" fill="#1f8ff0" />
            <path d="M16 34c2 2 4 3 7 1l5-3c2-1 2-3 0-4l-3-2-2-5 8 3c4 2 6 5 4 9-1 3-3 4-6 5-5 3-12 2-13-4z" fill="#1c6fe0" />
          </svg>
        </label>
        <TaskButton label="Task view">
          <svg width="34" height="34" viewBox="0 0 34 34">
            <rect x="0" y="12" width="25" height="22" rx="1.500" fill="#2b2b2b" />
            <rect x="10" y="0" width="24" height="21" rx="1.500" fill="#fafafa" />
            <rect x="10" y="12" width="15" height="9" fill="#bcbcbc" />
          </svg>
        </TaskButton>
        <TaskButton label="Chat">
          <svg width="35" height="35" viewBox="0 0 35 35">
            <defs>
              <linearGradient id="chat" x1="0" y1="0" x2="1" y2="0.600">
                <stop offset="0" stopColor="#8f66b8" />
                <stop offset="1" stopColor="#5560d2" />
              </linearGradient>
            </defs>
            <path d="M18 0a17.300 17.300 0 1 1-6 33.500L1 35l2-8A17.300 17.300 0 0 1 18 0z" fill="url(#chat)" />
            <rect x="8" y="10.500" width="14" height="14" rx="2.500" fill="#fff" />
            <path d="M23.500 16l4.500-4.500v12L23.500 19z" fill="#fff" />
          </svg>
        </TaskButton>
        <TaskButton label="File Explorer">
          <svg width="36" height="34" viewBox="0 0 36 34">
            <path d="M0 2a1 1 0 0 1 1-1h10l4 4h-4L9 7H0z" fill="#dba011" />
            <path d="M0 8h10l4-4h21a1 1 0 0 1 1 1v27a1.500 1.500 0 0 1-1.500 1.500h-33A1.500 1.500 0 0 1 0 32z" fill="#fccf45" />
            <path d="M6 33.500V27a4 4 0 0 1 4-4h16a4 4 0 0 1 4 4v6.500z" fill="#0f77c9" />
            <path d="M11 28h14" stroke="#0b4a88" strokeWidth="2" />
          </svg>
        </TaskButton>
        <TaskButton label="Microsoft Edge" active>
          <EdgeLogo />
        </TaskButton>
        <TaskButton label="Microsoft Store">
          <svg width="36" height="36" viewBox="0 0 36 36">
            <path d="M9 8V2.500h18V8" fill="none" stroke="#29b9ee" strokeWidth="2.400" />
            <path d="M.5 6h35v25a4.500 4.500 0 0 1-4.500 4.500H5A4.500 4.500 0 0 1 .5 31z" fill="#174f87" />
            <path d="M9 2.500V8M27 2.500V8" stroke="#29b9ee" strokeWidth="2.400" />
            <rect x="10.500" y="14" width="7" height="7" fill="#f25022" />
            <rect x="18.500" y="14" width="7" height="7" fill="#7fba00" />
            <rect x="10.500" y="22" width="7" height="7" fill="#00a4ef" />
            <rect x="18.500" y="22" width="7" height="7" fill="#ffb900" />
          </svg>
        </TaskButton>
        <TaskButton label="Head tracker">
          <svg width="36" height="36" viewBox="0 0 36 36">
            <defs>
              <linearGradient id="head" x1="0" y1="1" x2="1" y2="0">
                <stop offset="0" stopColor="#1334f5" />
                <stop offset="0.500" stopColor="#a5328c" />
                <stop offset="1" stopColor="#ff2a22" />
              </linearGradient>
            </defs>
            <rect width="36" height="36" fill="url(#head)" />
            <path d="M10 28V23c-6-7-1-15.500 8-15.500 7 0 9.500 5 9.500 10l1.500 4h-2v5.500H11" fill="none" stroke="#fff" strokeWidth="1.700" />
            <path d="M13.500 25h3v-3c-4-4-2-8.500 2-8.500s6 4.500 2.500 8v3.500h3" fill="none" stroke="#fff" strokeWidth="1.500" />
          </svg>
        </TaskButton>
        <TaskButton label="Xbox">
          <span className="flex h-[36px] w-[36px] items-center justify-center rounded-[3px] bg-[#107c10] text-white">
            <FaXbox size={29} />
          </span>
        </TaskButton>
        <TaskButton label="Discord">
          <span className="flex h-[36px] w-[36px] items-center justify-center rounded-full bg-[#5865f2] text-white">
            <FaDiscord size={23} />
          </span>
          <span className="absolute top-[42px] left-[14px] h-[5px] w-[9px] rounded-full bg-[#84868f]" />
        </TaskButton>
      </div>
      <div className="flex h-full items-center justify-end pr-[30px] pb-[2px] text-[#1b1b1f]">
        <button aria-label="Show hidden icons">
          <ChevronUp size={24} strokeWidth={1.800} />
        </button>
        <button aria-label="Network, volume and battery" className="ml-[23px] flex items-center gap-[10px]">
          <svg width="25" height="20" viewBox="0 0 25 20" fill="none" stroke="currentColor" strokeWidth="1.600">
            <path d="M1 7.500a16 16 0 0 1 23 0M4.500 11a11 11 0 0 1 16 0M8 14a6 6 0 0 1 9 0" />
            <circle cx="12.500" cy="16.500" r="1.800" fill="currentColor" stroke="none" />
          </svg>
          <svg width="26" height="22" viewBox="0 0 26 22" fill="none" stroke="currentColor" strokeWidth="1.500">
            <path d="M1.500 8h4L11 3v16l-5.500-5h-4zM14 8c1.500 2 1.500 4 0 6M17.500 5c3 3.500 3 8.500 0 12M21 2.500c4.500 5 4.500 12 0 17" />
          </svg>
          <svg width="26" height="22" viewBox="0 0 26 22" fill="none" stroke="currentColor" strokeWidth="1.700">
            <path d="M9 5.500h11a2.500 2.500 0 0 1 2.500 2.500v8a2.500 2.500 0 0 1-2.500 2.500H4A2.500 2.500 0 0 1 1.500 16v-5" />
            <path d="M7 8h9v8H3.500z" fill="currentColor" stroke="none" />
            <path d="M23 10h2v4h-2M5 0L1 7h3l-1 5 5-7H5z" fill="currentColor" stroke="none" />
          </svg>
        </button>
        <button className="ml-[26px] text-right text-[17px] leading-[24px]">
          9:10 PM
          <br />
          8/31/2023
        </button>
        <span className="ml-[11px] flex h-[24px] w-[24px] items-center justify-center rounded-full bg-[#0078d7] text-[14px] text-white">6</span>
      </div>
    </footer>
  );
}

export default function App() {
  return (
    <div className="flex h-screen flex-col overflow-hidden bg-[#a71720] font-['Open_Sans','Noto_Sans',sans-serif]">
      <TabStrip />
      <Toolbar />
      <div className="flex min-h-0 flex-1 pb-[5px] pl-[6px]">
        <div className="flex min-w-0 flex-1 overflow-hidden rounded-[12px] bg-white">
          <GlobalNav />
          <CoursePage />
        </div>
        <EdgeSidebar />
      </div>
      <Taskbar />
    </div>
  );
}
